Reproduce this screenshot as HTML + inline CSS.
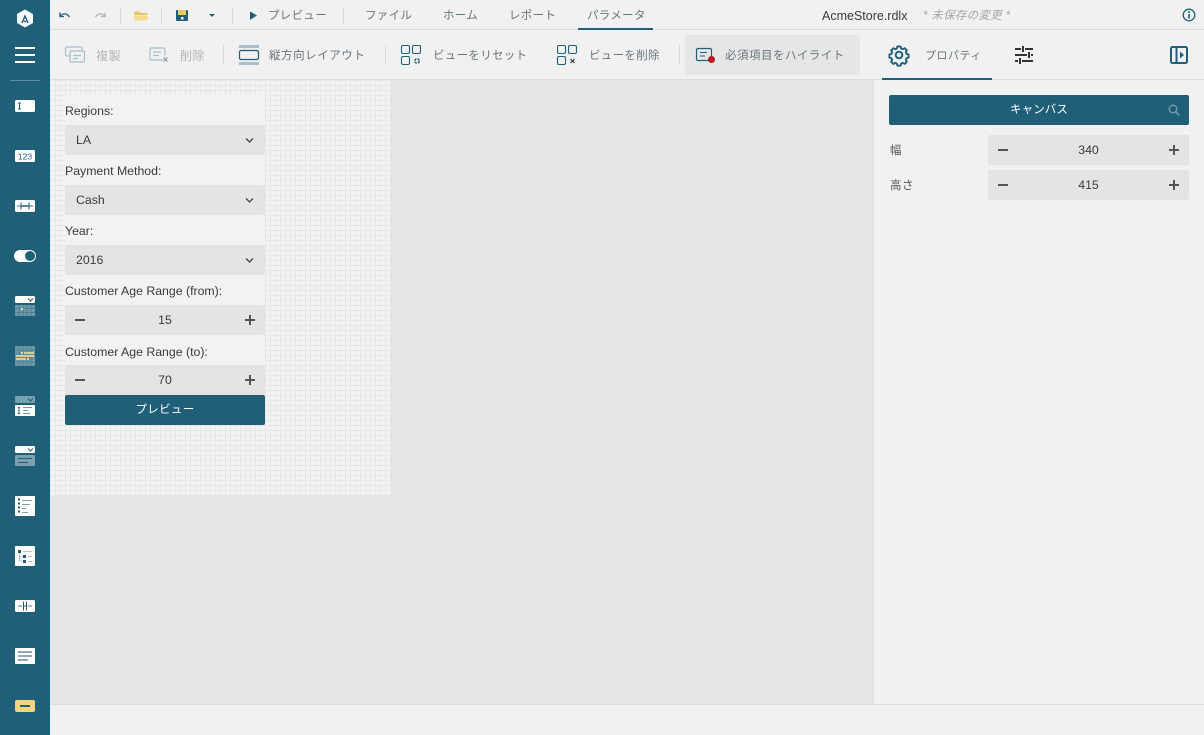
<!DOCTYPE html>
<html lang="ja"><head><meta charset="utf-8"><title>AcmeStore</title>
<style>
*{box-sizing:border-box}
html,body{margin:0;padding:0;width:1204px;height:735px;overflow:hidden;background:#f1f1f1;font-family:"Liberation Sans","Noto Sans CJK JP",sans-serif;color:#333;font-size:12px}
.a{position:absolute}
.t{position:absolute;white-space:nowrap;line-height:16px;height:16px}
svg{position:absolute;overflow:visible}
.sep{position:absolute;width:1px;background:#d8d8d8}
.box{position:absolute;background:#e4e4e4;border-radius:2px}
.lab{position:absolute;white-space:nowrap;font-size:12.3px;line-height:16px;color:#3a3a3a;left:65px}
.val{position:absolute;white-space:nowrap;font-size:12.3px;line-height:16px;color:#3a3a3a}
.jp{color:#66767e;font-size:11.5px;letter-spacing:.3px}
</style></head><body>
<div class="a" style="left:50px;top:80px;width:824px;height:624px;background:#e5e5e5"></div>
<div class="a" style="left:50px;top:80px;width:340px;height:415px;background-color:#f3f3f3;background-image:linear-gradient(#e7e7e7 1px,transparent 1px),linear-gradient(90deg,#e7e7e7 1px,transparent 1px);background-size:5px 5px"></div>
<div class="a" style="left:50px;top:29px;width:1154px;height:1px;background:#dcdcdc"></div>
<div class="a" style="left:50px;top:79px;width:1154px;height:1px;background:#dcdcdc"></div>
<div class="a" style="left:50px;top:704px;width:1154px;height:1px;background:#dcdcdc"></div>

<!-- sidebar -->
<div class="a" style="left:0;top:0;width:50px;height:735px;background:#1f5f78"></div>
<svg style="left:0;top:0" width="50" height="735" viewBox="0 0 50 735">
<path d="M25 10l7.500 4.300v8.400L25 27l-7.500-4.300v-8.400z" fill="#fff" stroke="#fff" stroke-linejoin="round"/>
<path d="M22 23l3-7 3 7M24 21l2 1" fill="none" stroke="#1f5f78" stroke-width="1.500"/>
<path d="M15 48h20M15 55h20M15 62h20" stroke="#fff" stroke-width="2"/>
<path d="M10 80.500h30" stroke="#5f8ea1"/>
<rect x="15" y="100" width="20" height="12" rx="1.500" fill="#fff"/><path d="M18 103h3M18 109h3M19.500 103v6" stroke="#1f5f78" stroke-width="1"/>
<rect x="15" y="150" width="20" height="12" rx="1.500" fill="#fff"/><text x="25" y="159.300" text-anchor="middle" font-size="8.500" font-family="Liberation Sans, sans-serif" fill="#1f5f78">123</text>
<rect x="15" y="200" width="20" height="12" rx="1.500" fill="#fff"/><path d="M17 206h16" stroke="#9fb7c2" stroke-width="2"/><path d="M21 202.500v7M29 202.500v7M21 206h8" stroke="#1f5f78"/>
<rect x="14" y="250" width="22" height="12" rx="6" fill="#fff"/><circle cx="30" cy="256" r="5" fill="#1f5f78"/>
<rect x="15" y="296" width="20" height="7" rx="1.500" fill="#fff"/><path d="M28 298.500l2.500 2.500 2.500-2.500" fill="none" stroke="#1f5f78"/>
<rect x="15" y="305" width="20" height="11" rx="1" fill="#6f98a9"/><path d="M15 308.500h20M15 312.500h20M19 305v11M23 305v11M27 305v11M31 305v11" stroke="#1f5f78" stroke-opacity=".5" stroke-width=".7"/><rect x="21" y="308" width="2" height="2" fill="#f5d67b"/>
<rect x="15" y="346" width="20" height="20" rx="1" fill="#6f98a9"/><path d="M15 350h20M15 354h20M15 358h20M15 362h20M19 346v20M23 346v20M27 346v20M31 346v20" stroke="#1f5f78" stroke-opacity=".5" stroke-width=".7"/><path d="M24 353h10M16 356h18M16 359h10" stroke="#d9cf94" stroke-width="2"/><rect x="21" y="352" width="2" height="2" fill="#f5d67b"/><rect x="27" y="358" width="2" height="2" fill="#f5d67b"/>
<rect x="15" y="396" width="20" height="7" rx="1.500" fill="#7ba0b0"/><path d="M28 398.500l2.500 2.500 2.500-2.500" fill="none" stroke="#1f5f78"/>
<rect x="15" y="405" width="20" height="11" rx="1" fill="#fff"/><path d="M18 407.500h2M18 413.500h2M19 407.500v6" stroke="#1f5f78"/><path d="M23 407.500h9M23 410.500h5M23 413.500h7" stroke="#6f98a9"/>
<rect x="15" y="446" width="20" height="7" rx="1.500" fill="#fff"/><path d="M28 448.500l2.500 2.500 2.500-2.500" fill="none" stroke="#1f5f78"/>
<rect x="15" y="455" width="20" height="11" rx="1" fill="#7ba0b0"/><path d="M18 458.500h14M18 462.500h10" stroke="#1f5f78"/>
<rect x="15" y="496" width="20" height="20" rx="1" fill="#fff"/><path d="M18 499.500h2M18 503.500h2M18 507.500h2M18 511.500h2" stroke="#1f5f78" stroke-width="2"/><path d="M22 500.500h10M22 504.500h8M22 508.500h4M22 512.500h6" stroke="#7ba0b0"/>
<rect x="15" y="546" width="20" height="20" rx="1" fill="#fff"/><rect x="18" y="550" width="3" height="3" fill="#1f5f78"/><rect x="23" y="555" width="3" height="3" fill="#1f5f78"/><rect x="23" y="560" width="3" height="3" fill="#1f5f78"/><path d="M19.500 553v8h3M19.500 556.500h3M23 551.500h9M28 556.500h4M28 561.500h4" stroke="#b3c3cb" fill="none"/>
<rect x="15" y="600" width="20" height="12" rx="1.500" fill="#fff"/><path d="M18 606h4M28 606h4" stroke="#a9bcc5" stroke-width="2"/><path d="M23.500 601.500v9M26.500 601.500v9M23.500 606h3" stroke="#1f5f78"/>
<rect x="15" y="648" width="20" height="16" rx="1" fill="#fff"/><path d="M18 652h14M18 656h14M18 660h10" stroke="#8fa9b6" stroke-width="2"/>
<rect x="15" y="700" width="20" height="12" rx="2" fill="#f4d47c"/><rect x="20" y="705" width="10" height="2" fill="#1f5f78"/>
</svg>

<!-- top row -->
<svg style="left:50px;top:0" width="300" height="30" viewBox="50 0 300 30">
<path d="M60 12.500v4h4M60.500 16c2-2.500 6-3.500 9 1" fill="none" stroke="#1f5f78" stroke-width="1.300"/>
<path d="M105 12.500v4h-4M104.500 16c-2-2.500-6-3.500-9 1" fill="none" stroke="#a9b5ba" stroke-width="1.300"/>
<path d="M134 13a1.500 1.500 0 0 1 1.500-1.500h3.500l1.500 1.500h6a1 1 0 0 1 1 1v1h-13.500z" fill="#e6c565"/><path d="M134 15.500h13.500v4a1 1 0 0 1-1 1H135a1 1 0 0 1-1-1z" fill="#f7dc8a"/>
<rect x="176" y="10" width="12" height="11" rx="1" fill="#1f5f78"/><rect x="178" y="10" width="8" height="5" fill="#f1c85f"/><rect x="181" y="17" width="2.500" height="2.500" fill="#fff"/>
<path d="M209 14h6l-3 3z" fill="#1f5f78"/>
<path d="M250 11.500l7 4-7 4.500z" fill="#1f5f78"/>
</svg>
<div class="sep" style="left:120px;top:8px;height:15px"></div>
<div class="sep" style="left:161px;top:8px;height:15px"></div>
<div class="sep" style="left:232px;top:8px;height:15px"></div>
<div class="sep" style="left:343px;top:8px;height:15px"></div>
<div class="t jp" style="left:268px;top:8px">プレビュー</div>
<div class="t jp" style="left:365px;top:8px">ファイル</div>
<div class="t jp" style="left:443px;top:8px">ホーム</div>
<div class="t jp" style="left:509px;top:8px">レポート</div>
<div class="t jp" style="left:587px;top:8px">パラメータ</div>
<div class="a" style="left:578px;top:28px;width:75px;height:2px;background:#1f5f78"></div>
<div class="t" style="left:822px;top:8px;font-size:12.500px;color:#3a3a3a">AcmeStore.rdlx</div>
<div class="t" style="left:923px;top:8px;font-size:11.500px;font-style:italic;color:#a5a5a5;letter-spacing:.3px">* 未保存の変更 *</div>
<svg style="left:1182px;top:8px" width="14" height="14" viewBox="0 0 14 14"><circle cx="7" cy="7" r="5.800" fill="none" stroke="#1f5f78" stroke-width="1.300"/><path d="M7 6v4.500" stroke="#1f5f78" stroke-width="1.600"/><circle cx="7" cy="4" r="1" fill="#1f5f78"/></svg>

<!-- ribbon -->
<div class="a" style="left:685px;top:35px;width:175px;height:40px;background:#e6e6e6;border-radius:2px"></div>
<svg style="left:50px;top:30px" width="1154" height="50" viewBox="50 30 1154 50">
<g fill="none" stroke="#a5bfcb" stroke-width="1.200"><path d="M70 56h-2.500a2 2 0 0 1-2-2v-5a2 2 0 0 1 2-2H80a2 2 0 0 1 2 2v2"/><rect x="70" y="51" width="14.500" height="11" rx="1.500"/><path d="M73 55.500h8M73 58.500h5"/></g>
<g fill="none" stroke="#a5bfcb" stroke-width="1.200"><path d="M163 60h-11.500a1.500 1.500 0 0 1-1.500-1.500v-9a1.500 1.500 0 0 1 1.500-1.500h12a1.500 1.500 0 0 1 1.500 1.500v6"/><path d="M153 52h8M153 55.500h6"/></g><path d="M163.500 57.500l4 4M167.500 57.500l-4 4" stroke="#8a979d" stroke-width="1.200"/>
<rect x="239" y="45" width="20" height="3" fill="#a5bfcb"/><rect x="239.500" y="50.500" width="19" height="9" rx="1.500" fill="none" stroke="#1f5f78" stroke-width="1.200"/><rect x="239" y="62" width="20" height="3" fill="#a5bfcb"/>
<g fill="none" stroke="#1f5f78" stroke-width="1.100"><rect x="401.500" y="45.500" width="8" height="8" rx="1.500"/><rect x="412.500" y="45.500" width="8" height="8" rx="1.500"/><rect x="401.500" y="56.500" width="8" height="8" rx="1.500"/><circle cx="417" cy="61" r="2.200" stroke-width="1.400" stroke-dasharray="2.500 1"/></g>
<g fill="none" stroke="#1f5f78" stroke-width="1.100"><rect x="557.500" y="45.500" width="8" height="8" rx="1.500"/><rect x="568.500" y="45.500" width="8" height="8" rx="1.500"/><rect x="557.500" y="56.500" width="8" height="8" rx="1.500"/></g><path d="M570.500 59l4 4M574.500 59l-4 4" stroke="#333" stroke-width="1.200"/>
<rect x="696.500" y="48.500" width="15" height="12" rx="1.500" fill="none" stroke="#1f5f78" stroke-width="1.200"/><path d="M700 52.500h7M700 56h5" stroke="#1f5f78"/><circle cx="711.500" cy="59.500" r="3.500" fill="#b81c22"/>
<g fill="none" stroke="#1f5f78" stroke-width="2"><circle cx="899" cy="55" r="3.300"/><path d="M897.300 46.500h3.400l.5 2.100 1.800.8 1.900-1.100 2.400 2.400-1.100 1.900.8 1.800 2.100.5v3.400l-2.100.5-.8 1.800 1.100 1.900-2.400 2.400-1.900-1.100-1.800.8-.5 2.100h-3.400l-.5-2.100-1.800-.8-1.900 1.100-2.400-2.400 1.100-1.900-.8-1.800-2.100-.5v-3.400l2.100-.5.8-1.800-1.100-1.900 2.400-2.400 1.900 1.100 1.800-.8z" transform="translate(899 55) scale(.95) translate(-899 -55.500)" stroke-linejoin="round"/></g>
<path d="M1015 49h6M1025 49h8M1015 55h12M1031 55h2M1015 61h3M1022 61h11" stroke="#333" stroke-width="2" fill="none"/><path d="M1023 46v6M1029 52v6M1020 58v6" stroke="#333" stroke-width="2"/>
<rect x="1171" y="47" width="16" height="16" rx="1.500" fill="none" stroke="#1f5f78" stroke-width="2"/><path d="M1176.500 47v16" stroke="#1f5f78" stroke-width="2"/><path d="M1180 51.500l4 3.500-4 3.500z" fill="#1f5f78"/>
</svg>
<div class="t" style="left:96px;top:48px;font-size:12px;letter-spacing:.5px;color:#b5b5b5">複製</div>
<div class="t" style="left:180px;top:48px;font-size:12px;letter-spacing:.5px;color:#b5b5b5">削除</div>
<div class="sep" style="left:223px;top:45px;height:20px"></div>
<div class="t jp" style="left:269px;top:48px;letter-spacing:.55px">縦方向レイアウト</div>
<div class="sep" style="left:385px;top:45px;height:20px"></div>
<div class="t jp" style="left:433px;top:48px;letter-spacing:.3px">ビューをリセット</div>
<div class="t jp" style="left:589px;top:48px;letter-spacing:.3px">ビューを削除</div>
<div class="sep" style="left:679px;top:45px;height:20px"></div>
<div class="t jp" style="left:725px;top:48px;letter-spacing:.5px">必須項目をハイライト</div>
<div class="t jp" style="left:925px;top:48px;font-size:11px;letter-spacing:.5px">プロパティ</div>
<div class="a" style="left:882px;top:78px;width:110px;height:2px;background:#1f5f78"></div>

<!-- right panel -->
<div class="a" style="left:874px;top:80px;width:330px;height:624px;background:#f1f1f1"></div>
<div class="a" style="left:889px;top:95px;width:300px;height:30px;background:#1f5f78;border-radius:2px"></div>
<div class="t" style="left:889px;top:102px;width:300px;text-align:center;color:#fff;font-size:11.500px;letter-spacing:.1px">キャンバス</div>
<svg style="left:1168px;top:104px" width="12" height="12" viewBox="0 0 12 12"><circle cx="5" cy="5" r="3.800" fill="none" stroke="#7ba0b0" stroke-width="1.300"/><path d="M8 8l3.500 3.500" stroke="#7ba0b0" stroke-width="1.500"/></svg>
<div class="t" style="left:890px;top:143px;font-size:11.500px;color:#555">幅</div>
<div class="t" style="left:890px;top:178px;font-size:11.500px;color:#555;letter-spacing:.5px">高さ</div>
<div class="box" style="left:988px;top:135px;width:201px;height:30px"></div>
<div class="box" style="left:988px;top:170px;width:201px;height:30px"></div>
<div class="val" style="left:988px;top:142px;width:201px;text-align:center">340</div>
<div class="val" style="left:988px;top:177px;width:201px;text-align:center">415</div>

<!-- form -->
<div class="a" style="left:65px;top:95px;width:200px;height:330px;background:#f2f2f2"></div>
<div class="lab" style="top:103px">Regions:</div>
<div class="box" style="left:65px;top:125px;width:200px;height:30px"></div>
<div class="val" style="left:76px;top:132px">LA</div>
<div class="lab" style="top:163px">Payment Method:</div>
<div class="box" style="left:65px;top:185px;width:200px;height:30px"></div>
<div class="val" style="left:76px;top:192px">Cash</div>
<div class="lab" style="top:223px">Year:</div>
<div class="box" style="left:65px;top:245px;width:200px;height:30px"></div>
<div class="val" style="left:76px;top:252px">2016</div>
<div class="lab" style="top:283px">Customer Age Range (from):</div>
<div class="box" style="left:65px;top:305px;width:200px;height:30px"></div>
<div class="val" style="left:65px;top:312px;width:200px;text-align:center">15</div>
<div class="lab" style="top:344px">Customer Age Range (to):</div>
<div class="box" style="left:65px;top:365px;width:200px;height:30px"></div>
<div class="val" style="left:65px;top:372px;width:200px;text-align:center">70</div>
<div class="a" style="left:65px;top:395px;width:200px;height:30px;background:#1f5f78;border-radius:2px"></div>
<div class="t" style="left:65px;top:402px;width:200px;text-align:center;color:#fff;font-size:11.500px;letter-spacing:.3px">プレビュー</div>

<svg style="left:0;top:0" width="1204" height="735" viewBox="0 0 1204 735">
<g fill="none" stroke="#444" stroke-width="1.300"><path d="M246 138.500l3.500 3.500 3.500-3.500M246 198.500l3.500 3.500 3.500-3.500M246 258.500l3.500 3.500 3.500-3.500"/></g>
<g stroke="#555" stroke-width="2"><path d="M75 320h10M245 320h10M250 315v10M75 380h10M245 380h10M250 375v10M998 150h10M1169 150h10M1174 145v10M998 185h10M1169 185h10M1174 180v10"/></g>
</svg>
</body></html>
